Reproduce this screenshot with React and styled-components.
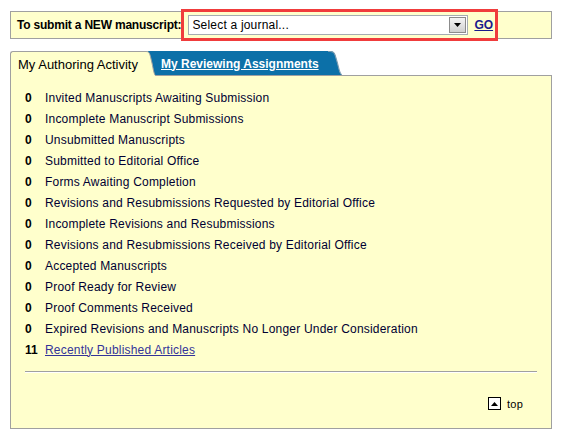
import styled, { createGlobalStyle } from 'styled-components'

const GlobalStyle = createGlobalStyle`
  html, body {
    margin: 0;
    padding: 0;
    background: #fff;
  }
  body {
    font-family: Arial, 'Liberation Sans', sans-serif;
    font-size: 12px;
    color: #000;
  }
`

const items = [
  { count: 0, label: 'Invited Manuscripts Awaiting Submission' },
  { count: 0, label: 'Incomplete Manuscript Submissions' },
  { count: 0, label: 'Unsubmitted Manuscripts' },
  { count: 0, label: 'Submitted to Editorial Office' },
  { count: 0, label: 'Forms Awaiting Completion' },
  { count: 0, label: 'Revisions and Resubmissions Requested by Editorial Office' },
  { count: 0, label: 'Incomplete Revisions and Resubmissions' },
  { count: 0, label: 'Revisions and Resubmissions Received by Editorial Office' },
  { count: 0, label: 'Accepted Manuscripts' },
  { count: 0, label: 'Proof Ready for Review' },
  { count: 0, label: 'Proof Comments Received' },
  { count: 0, label: 'Expired Revisions and Manuscripts No Longer Under Consideration' },
  { count: 11, label: 'Recently Published Articles', link: true },
]

const Page = styled.div`
  padding: 11px 10px 16px 10px;
  width: 542px;
`

const SubmitBar = styled.div`
  display: flex;
  align-items: center;
  height: 26px;
  border: 1px solid #a0a0a0;
  background: #ffffcc;
  padding-left: 6px;
`

const SubmitLabel = styled.span`
  font-weight: bold;
  font-size: 12px;
  letter-spacing: -0.2px;
  color: #000;
`

const Highlight = styled.div`
  display: flex;
  align-items: center;
  height: 26px;
  margin: -3px 0 -3px 0;
  border: 3px solid #f03c3c;
  padding: 0 2px 0 4px;
`

const Select = styled.div`
  display: flex;
  align-items: center;
  width: 278px;
  height: 18px;
  border: 1px solid #a5acb2;
  background: #fff;
  font-size: 12px;
  letter-spacing: 0.2px;
  color: #000;
`

const SelectText = styled.span`
  flex: 1;
  padding-left: 3px;
`

const SelectButton = styled.span`
  display: flex;
  align-items: center;
  justify-content: center;
  width: 17px;
  height: 16px;
  margin-right: 1px;
  border: 1px solid #8c8c8c;
  background: linear-gradient(#f4f4f4, #d0d0d0);
  box-sizing: border-box;
`

const GoLink = styled.a`
  margin-left: 6px;
  color: #1a1a8c;
  font-weight: bold;
  text-decoration: underline;
  font-size: 12px;
`

const TabRow = styled.div`
  display: flex;
  align-items: flex-end;
  margin-top: 11px;
  height: 25px;
`

const Tab = styled.div`
  position: relative;
  z-index: ${(p) => (p.active ? 2 : 1)};
  display: flex;
  align-items: center;
  height: 24px;
  padding-left: ${(p) => p.pad}px;
  width: ${(p) => p.w}px;
  margin-left: ${(p) => (p.active ? 0 : -4)}px;
  background: ${(p) => (p.active ? '#ffffcc' : '#0c70a8')};
  border-top: 1px solid ${(p) => (p.active ? '#a0a0a0' : '#0c70a8')};
  border-left: 1px solid ${(p) => (p.active ? '#a0a0a0' : '#0c70a8')};
  border-top-left-radius: 3px;
  box-sizing: border-box;
  font-size: ${(p) => (p.active ? '13px' : '12px')};
  color: ${(p) => (p.active ? '#000' : '#fff')};
  font-weight: ${(p) => (p.active ? 'normal' : 'bold')};
  text-decoration: ${(p) => (p.active ? 'none' : 'underline')};
  ${(p) => p.active && 'height: 25px; margin-bottom: -1px;'}
`

const TabEdge = styled.svg`
  position: absolute;
  top: -1px;
  right: ${(p) => -p.$w}px;
  width: ${(p) => p.$w}px;
  height: calc(100% + 1px);
`

const Panel = styled.div`
  border: 1px solid #a0a0a0;
  background: #ffffcc;
  padding: 11px 14px 0 14px;
  height: 341px;
`

const List = styled.ul`
  list-style: none;
  margin: 0;
  padding: 0;
`

const Row = styled.li`
  display: flex;
  height: 21px;
  align-items: center;
  color: #000033;
  letter-spacing: 0.2px;
`

const Count = styled.span`
  width: 20px;
  font-weight: bold;
  color: #000;
  letter-spacing: 0;
`

const ItemLink = styled.a`
  color: #333399;
  text-decoration: underline;
`

const Divider = styled.div`
  margin-top: 11px;
  border-top: 1px solid #a0a0a0;
  border-bottom: 1px solid #fff;
`

const TopRow = styled.div`
  display: flex;
  justify-content: flex-end;
  align-items: center;
  gap: 6px;
  margin-top: 24px;
  padding-right: 14px;
  font-size: 11px;
  letter-spacing: 0.2px;
  color: #000;
`

const TopIcon = styled.span`
  display: flex;
  align-items: center;
  justify-content: center;
  width: 11px;
  height: 11px;
  border: 1px solid #000;
  background: #fff;
`

function TabCurve({ fill, stroke, w }) {
  return (
    <TabEdge $w={w} viewBox="0 0 12 25" preserveAspectRatio="none">
      <path d="M0 0 L2 0 C6 0 6 4 8 12 C9.5 19 10 24 12 25 L0 25 Z" fill={fill} />
      <path d="M0 0.5 L2 0.5 C6 0.5 6 4 8 12 C9.5 19 10 24 12 25" fill="none" stroke={stroke} strokeWidth="1" />
    </TabEdge>
  )
}

export default function App() {
  return (
    <>
      <GlobalStyle />
      <Page>
        <SubmitBar>
          <SubmitLabel>To submit a NEW manuscript:</SubmitLabel>
          <Highlight>
            <Select>
              <SelectText>Select a journal...</SelectText>
              <SelectButton>
                <svg width="7" height="4" viewBox="0 0 7 4">
                  <path d="M0 0 H7 L3.5 4 Z" fill="#000" />
                </svg>
              </SelectButton>
            </Select>
            <GoLink href="#">GO</GoLink>
          </Highlight>
        </SubmitBar>

        <TabRow>
          <Tab active w={134} pad={7}>
            My Authoring Activity
            <TabCurve fill="#ffffcc" stroke="#a0a0a0" w={12} />
          </Tab>
          <Tab w={188} pad={20}>
            My Reviewing Assignments
            <TabCurve fill="#0c70a8" stroke="#7c9cb0" w={14} />
          </Tab>
        </TabRow>

        <Panel>
          <List>
            {items.map((it) => (
              <Row key={it.label}>
                <Count>{it.count}</Count>
                {it.link ? <ItemLink href="#">{it.label}</ItemLink> : <span>{it.label}</span>}
              </Row>
            ))}
          </List>
          <Divider />
          <TopRow>
            <TopIcon>
              <svg width="7" height="4" viewBox="0 0 7 4">
                <path d="M0 4 H7 L3.5 0 Z" fill="#000" />
              </svg>
            </TopIcon>
            top
          </TopRow>
        </Panel>
      </Page>
    </>
  )
}
